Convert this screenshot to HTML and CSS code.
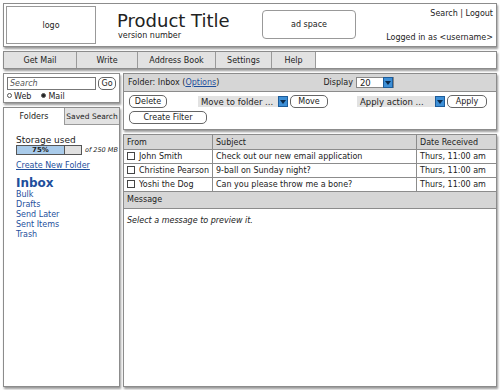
FILE: index.html
```html
<!DOCTYPE html>
<html lang="en">
<head>
    <meta charset="UTF-8">
    <title>Mail</title>
    <link rel="stylesheet" href="styles.css">
</head>
<body>
    <div class="page">
        <!-- header -->
        <header class="top box">
            <div class="logo">logo</div>
            <div class="title">
                <h1>Product Title</h1>
                <span class="version">version number</span>
            </div>
            <div class="ad">ad space</div>
            <div class="account">
                <div class="links">Search | Logout</div>
                <div>Logged in as &lt;username&gt;</div>
            </div>
        </header>

        <!-- menu -->
        <nav class="menu box">
            <span class="item w-get">Get Mail</span>
            <span class="item w-write">Write</span>
            <span class="item w-address">Address Book</span>
            <span class="item w-settings">Settings</span>
            <span class="item w-help">Help</span>
        </nav>

        <div class="main">
            <aside class="side">
                <div class="search box">
                    <div class="search-row">
                        <span class="input">Search</span>
                        <span class="btn go">Go</span>
                    </div>
                    <div class="radios">
                        <span><i class="radio"></i>Web</span>
                        <span><i class="radio on"></i>Mail</span>
                    </div>
                </div>

                <div class="folders box">
                    <div class="tabs">
                        <span class="tab active">Folders</span>
                        <span class="tab">Saved Search</span>
                    </div>
                    <div class="folder-body">
                        <div class="storage">Storage used</div>
                        <div class="meter-row">
                            <div class="meter"><div class="fill" style="width: 75%">75%</div></div>
                            <span class="of">of 250 MB</span>
                        </div>
                        <a class="new-folder">Create New Folder</a>
                        <ul class="folder-list">
                            <li class="inbox">Inbox</li>
                            <li>Bulk</li>
                            <li>Drafts</li>
                            <li>Send Later</li>
                            <li>Sent Items</li>
                            <li>Trash</li>
                        </ul>
                    </div>
                </div>
            </aside>

            <section class="content">
                <div class="toolbar box">
                    <div class="bar-head">
                        <span>Folder: Inbox (<a>Options</a>)</span>
                        <span class="display">Display <span class="select small">20<i class="arrow"></i></span></span>
                    </div>
                    <div class="actions">
                        <span class="btn delete">Delete</span>
                        <span class="select move-sel">Move to folder ...<i class="arrow"></i></span>
                        <span class="btn move">Move</span>
                        <span class="select apply-sel">Apply action ...<i class="arrow"></i></span>
                        <span class="btn apply">Apply</span>
                    </div>
                    <div class="actions second">
                        <span class="btn filter">Create Filter</span>
                    </div>
                </div>

                <div class="messages box">
                    <table class="list">
                        <tr class="head">
                            <td class="c-from">From</td>
                            <td>Subject</td>
                            <td class="c-date">Date Received</td>
                        </tr>
                        <tr>
                            <td><i class="check"></i>John Smith</td>
                            <td>Check out our new email application</td>
                            <td>Thurs, 11:00 am</td>
                        </tr>
                        <tr>
                            <td><i class="check"></i>Christine Pearson</td>
                            <td>9-ball on Sunday night?</td>
                            <td>Thurs, 11:00 am</td>
                        </tr>
                        <tr>
                            <td><i class="check"></i>Yoshi the Dog</td>
                            <td>Can you please throw me a bone?</td>
                            <td>Thurs, 11:00 am</td>
                        </tr>
                    </table>
                    <div class="msg-head">Message</div>
                    <p class="preview">Select a message to preview it.</p>
                </div>
            </section>
        </div>
    </div>
</body>
</html>
```

FILE: styles.css
```css
body,
html {
    padding: 0;
    margin: 0;
}

body {
    width: 500px;
    height: 390px;
    background: #fff;
    font-family: "DejaVu Sans", Verdana, sans-serif;
    font-size: 8px;
    color: #222;
}

.page {
    padding: 3px;
    display: flex;
    flex-direction: column;
    height: 384px;
}

.box {
    border: 1px solid #8c8c8c;
    box-shadow: 1px 2px 2px #9a9a9a;
    background: #fff;
}

/* header ---------------------------- */
.top {
    height: 44px;
    display: flex;
    align-items: stretch;
    padding: 2px 3px 2px 2px;
    box-sizing: border-box;
}

.logo {
    width: 88px;
    border: 1px solid #999;
    display: flex;
    align-items: center;
    justify-content: center;
}

.title {
    margin-left: 21px;
    padding-top: 4px;
    width: 140px;
}

.title h1 {
    margin: 0;
    font-weight: normal;
    font-size: 18px;
    line-height: 21px;
}

.version {
    display: block;
    margin-left: 1px;
    line-height: 9px;
}

.ad {
    width: 92px;
    margin: 4px 0 5px 5px;
    border: 1px solid #999;
    border-radius: 4px;
    display: flex;
    align-items: center;
    justify-content: center;
}

.account {
    flex: 1;
    display: flex;
    flex-direction: column;
    justify-content: space-between;
    align-items: flex-end;
    padding: 3px 0 2px;
}

/* menu ---------------------------- */
.menu {
    margin-top: 4px;
    height: 16px;
    display: flex;
}

.item {
    background: #e2e2e2;
    border-right: 1px solid #9a9a9a;
    display: flex;
    align-items: center;
    justify-content: center;
}

.w-get { width: 72px; }
.w-write { width: 60px; }
.w-address { width: 77px; }
.w-settings { width: 55px; }
.w-help { width: 43px; }

/* main ---------------------------- */
.main {
    flex: 1;
    display: flex;
    gap: 3px;
    margin-top: 4px;
}

.side {
    width: 117px;
    display: flex;
    flex-direction: column;
    gap: 4px;
}

.search {
    padding: 3px 3px 3px 3px;
    height: 22px;
}

.search-row {
    display: flex;
    gap: 2px;
}

.input {
    width: 85px;
    height: 11px;
    border: 1px solid #777;
    font-style: italic;
    color: #555;
    padding-left: 2px;
    line-height: 11px;
}

.btn {
    display: inline-flex;
    align-items: center;
    justify-content: center;
    border: 1px solid #666;
    border-radius: 5px;
    height: 11px;
    background: #fff;
    white-space: nowrap;
}

.go {
    flex: 1;
}

.radios {
    margin-top: 2px;
    display: flex;
    gap: 10px;
}

.radio {
    display: inline-block;
    width: 3px;
    height: 3px;
    border: 1px solid #555;
    border-radius: 50%;
    margin-right: 2px;
    vertical-align: 1px;
}

.radio.on {
    background: #222;
}

.folders {
    flex: 1;
}

.tabs {
    display: flex;
    height: 17px;
}

.tab {
    flex: 1;
    display: flex;
    align-items: center;
    justify-content: center;
    background: #e2e2e2;
    border-bottom: 1px solid #9a9a9a;
    border-left: 1px solid #9a9a9a;
    white-space: nowrap;
    font-size: 7.5px;
}

.tab.active {
    background: #fff;
    border: none;
    width: 60px;
    flex: none;
    font-size: 8px;
}

.folder-body {
    padding: 10px 0 0 12px;
}

.storage {
    font-size: 9px;
}

.meter-row {
    display: flex;
    align-items: center;
    gap: 3px;
    white-space: nowrap;
}

.meter {
    width: 64px;
    height: 8px;
    border: 1px solid #555;
    background: #e0e0e0;
    flex: none;
}

.fill {
    height: 8px;
    background: #a9cbea;
    border-right: 1px solid #555;
    font-weight: bold;
    font-size: 7px;
    text-align: center;
    line-height: 8px;
    box-sizing: border-box;
}

.of {
    font-style: italic;
    font-size: 6.5px;
}

a {
    color: #1e4f9c;
    text-decoration: underline;
}

.new-folder {
    display: block;
    margin-top: 6px;
}

.folder-list {
    list-style: none;
    margin: 7px 0 0;
    padding: 0;
    color: #1e4f9c;
}

.folder-list li {
    line-height: 10px;
}

.folder-list .inbox {
    font-size: 12px;
    font-weight: bold;
    line-height: 13px;
}

/* content ---------------------------- */
.content {
    flex: 1;
    display: flex;
    flex-direction: column;
    gap: 4px;
}

.toolbar {
    height: 55px;
}

.bar-head {
    background: #d6d6d6;
    height: 17px;
    border-bottom: 1px solid #8c8c8c;
    display: flex;
    align-items: center;
    padding-left: 4px;
}

.display {
    margin-left: 104px;
    display: flex;
    align-items: center;
    gap: 3px;
}

.select {
    display: inline-flex;
    align-items: center;
    justify-content: space-between;
    background: #e2e2e2;
    height: 11px;
    font-size: 8.5px;
    padding-left: 3px;
    white-space: nowrap;
    box-sizing: border-box;
}

.select.small {
    background: #fff;
    border: 1px solid #888;
    width: 38px;
}

.arrow {
    width: 10px;
    height: 11px;
    background: #3d8fd6;
    border: 1px solid #1d5c9a;
    box-sizing: border-box;
    position: relative;
    flex: none;
}

.arrow::after {
    content: "";
    position: absolute;
    left: 1px;
    top: 3px;
    border-left: 3px solid transparent;
    border-right: 3px solid transparent;
    border-top: 4px solid #0b2a4c;
}

.actions {
    display: flex;
    align-items: center;
    padding: 3px 0 0 5px;
}

.actions.second {
    padding-top: 3px;
}

.delete { width: 36px; }
.move-sel { width: 90px; margin-left: 31px; }
.move { width: 36px; margin-left: 2px; }
.apply-sel { width: 88px; margin-left: 29px; }
.apply { width: 38px; margin-left: 2px; }
.filter { width: 76px; }

.messages {
    flex: 1;
}

.list {
    width: 100%;
    border-collapse: collapse;
}

.list td {
    height: 13px;
    border-bottom: 1px solid #8c8c8c;
    border-right: 1px solid #8c8c8c;
    padding: 0 3px;
    white-space: nowrap;
}

.list td:last-child {
    border-right: none;
}

.list .head td {
    background: #d6d6d6;
    height: 14px;
}

.c-from { width: 78px; }
.c-date { width: 73px; }

.check {
    display: inline-block;
    width: 6px;
    height: 6px;
    border: 1px solid #444;
    margin-right: 4px;
    vertical-align: -1px;
}

.msg-head {
    background: #d6d6d6;
    height: 16px;
    border-bottom: 1px solid #8c8c8c;
    padding-left: 3px;
    line-height: 15px;
}

.preview {
    margin: 7px 0 0 3px;
    font-style: italic;
}
```
